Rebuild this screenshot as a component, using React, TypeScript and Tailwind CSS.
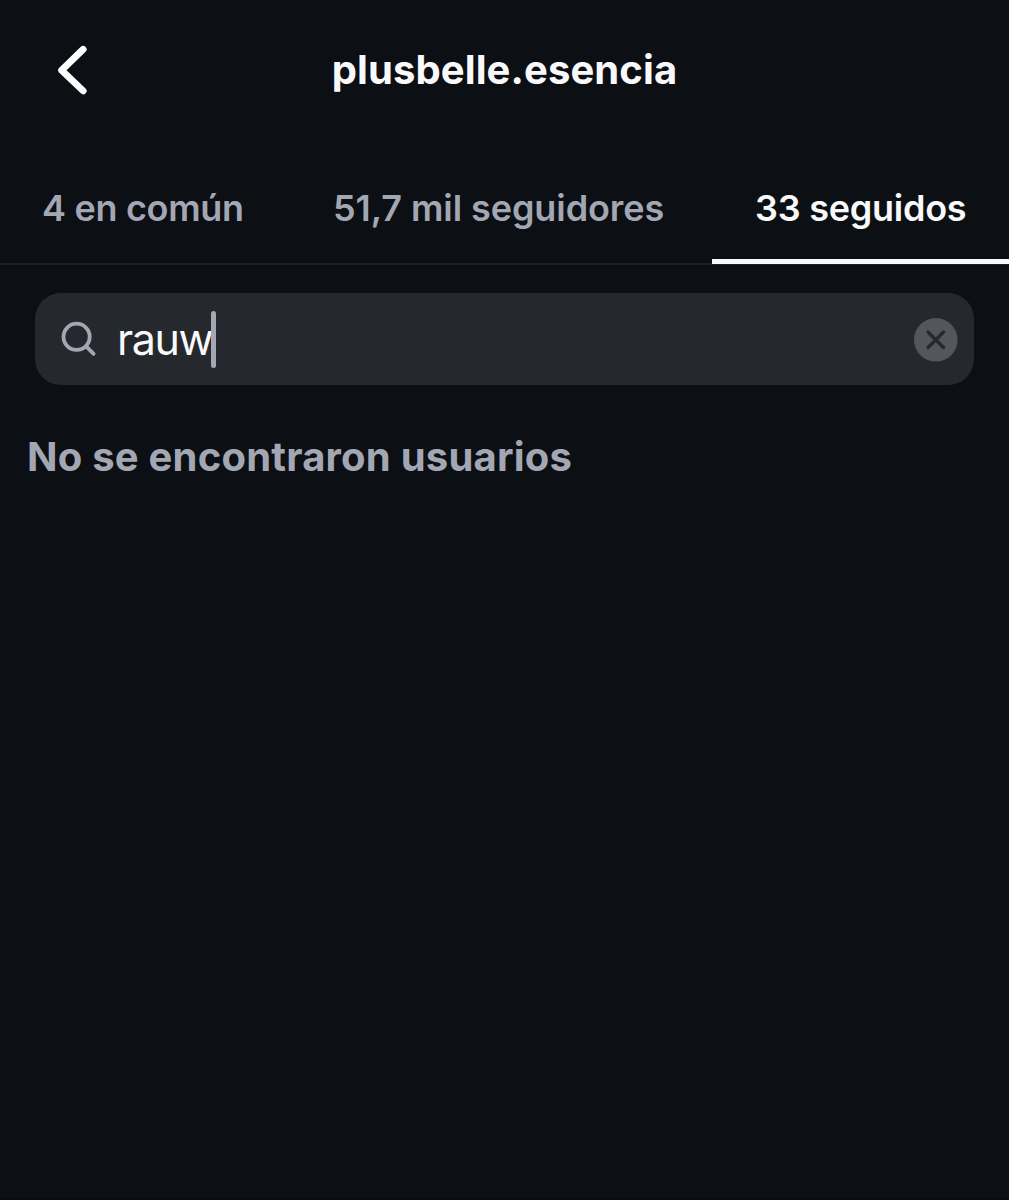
import React, { useState } from 'react';
import { clsx } from 'clsx';

interface Tab {
  id: string;
  label: string;
  className: string;
}

const TABS: Tab[] = [
  { id: 'mutual', label: '4 en común', className: 'w-[287px] pl-[42px] tracking-[-0.3px]' },
  { id: 'followers', label: '51,7 mil seguidores', className: 'w-[425px] pl-[46px] tracking-[-0.08px]' },
  { id: 'following', label: '33 seguidos', className: 'w-[297px] pl-[43px] tracking-[-0.25px]' },
];

const BackIcon = () => (
  <svg width="40" height="60" viewBox="0 0 40 60" fill="none" stroke="currentColor" strokeWidth="6.8" strokeLinecap="round" strokeLinejoin="round">
    <path d="M31.2 9.3 9.6 30.3l21.6 20.6" />
  </svg>
);

const SearchIcon = () => (
  <svg width="40" height="40" viewBox="0 0 40 40" fill="none" stroke="currentColor" strokeWidth="3.8" strokeLinecap="round">
    <circle cx="17.6" cy="17.8" r="13.1" />
    <path d="m27.4 27.6 7.2 7.2" />
  </svg>
);

const ClearIcon = () => (
  <svg width="44" height="44" viewBox="0 0 44 44" fill="none">
    <circle cx="21.8" cy="21.8" r="21.8" fill="#53565b" />
    <path d="m14.1 14.1 15.4 15.4m0-15.4L14.1 29.5" stroke="#25282d" strokeWidth="3.4" strokeLinecap="round" />
  </svg>
);

export default function App() {
  const [activeTab, setActiveTab] = useState('following');
  const [query, setQuery] = useState('rauw');

  return (
    <div className="flex h-[1200px] w-[1009px] flex-col overflow-hidden border-b-2 border-[#090a0f] bg-[#0c0f14] font-['Inter','Liberation_Sans',sans-serif] text-[#f9f9fb]">
      {/* Header */}
      <header className="grid h-[139px] grid-cols-[120px_1fr_120px] items-center">
        <button type="button" aria-label="Atrás" className="flex pl-[52px] text-white">
          <BackIcon />
        </button>
        <h1 className="text-center text-[40px] leading-none font-bold tracking-[0.1px]">plusbelle.esencia</h1>
      </header>

      {/* Tabs */}
      <nav className="flex h-[126px] border-b-2 border-[#1a1d22]">
        {TABS.map((tab) => (
          <button
            key={tab.id}
            type="button"
            onClick={() => setActiveTab(tab.id)}
            className={clsx(
              'h-[125px] border-b-[5px] pt-[18px] text-left text-[36px] leading-none font-semibold whitespace-nowrap',
              tab.className,
              activeTab === tab.id ? 'border-[#f9f7fb]' : 'border-transparent text-[#a3a7b3]'
            )}
          >
            {tab.label}
          </button>
        ))}
      </nav>

      {/* Search */}
      <div className="mx-[35px] mt-[28px] flex h-[92px] items-center rounded-[26px] bg-[#25282d] pl-6 pr-4">
        <span className="text-[#a3a7b3]">
          <SearchIcon />
        </span>
        <span className="ml-[18px] text-[43px] leading-none tracking-[-1.4px]">{query}</span>
        <span className="-ml-px h-[57px] w-[5px] rounded-full bg-[#a3a7b3]" />
        <button type="button" aria-label="Borrar" className="ml-auto pt-[2px]" onClick={() => setQuery('')}>
          <ClearIcon />
        </button>
      </div>

      {/* Empty state */}
      <p className="mt-[52px] pl-[27px] text-[40px] leading-none font-bold tracking-[0.22px] text-[#a3a7b3]">No se encontraron usuarios</p>
    </div>
  );
}
